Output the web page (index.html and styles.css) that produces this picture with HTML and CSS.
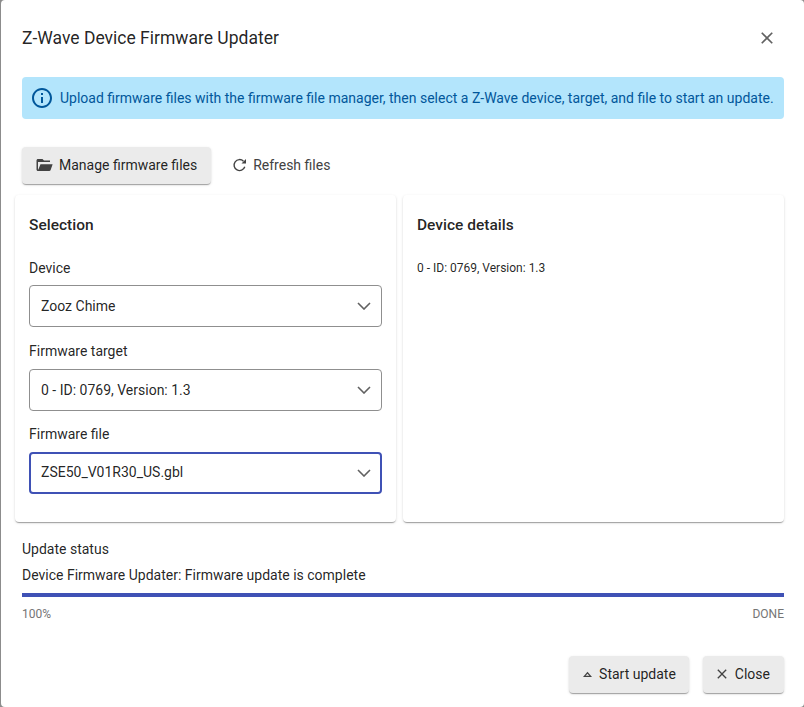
FILE: index.html
```html
<!DOCTYPE html>
<html lang="en">
<head>
<meta charset="utf-8">
<title>Z-Wave Device Firmware Updater</title>
<link rel="stylesheet" href="styles.css">
</head>
<body>
<main class="dialog">
  <header class="dialog-head">
    <h1 class="dialog-title">Z-Wave Device Firmware Updater</h1>
    <svg class="close-x" viewBox="0 0 24 24"><path d="M19 6.41 17.59 5 12 10.59 6.41 5 5 6.41 10.59 12 5 17.59 6.41 19 12 13.41 17.59 19 19 17.59 13.41 12z"/></svg>
  </header>
  <div class="alert">
    <svg class="alert-icon" viewBox="0 0 24 24"><path d="M11 7h2v2h-2zm0 4h2v6h-2zm1-9C6.48 2 2 6.48 2 12s4.48 10 10 10 10-4.48 10-10S17.52 2 12 2zm0 18c-4.41 0-8-3.59-8-8s3.59-8 8-8 8 3.59 8 8-3.59 8-8 8z"/></svg>
    <span>Upload firmware files with the firmware file manager, then select a Z-Wave device, target, and file to start an update.</span>
  </div>
  <div class="toolbar">
    <button class="btn raised manage">
      <svg class="btn-icon" viewBox="0 0 24 24"><path d="M20 6h-8l-2-2H4c-1.1 0-2 .9-2 2v12c0 1.1.9 2 2 2h15c.84 0 1.55-.52 1.84-1.25L23.5 11H7.3l-2.8 7H4V8h16z"/></svg>
      Manage firmware files
    </button>
    <button class="btn flat refresh">
      <svg class="refresh-icon" viewBox="0 0 16 16"><path class="refresh-arc" d="M12.800 9.800A5.500 5.500 0 1 1 11.500 4.200"/><path class="refresh-head" d="M14 2v4.500H9.500z"/></svg>
      Refresh files
    </button>
  </div>
  <div class="cards">
    <section class="card">
      <h2 class="card-title">Selection</h2>
      <div class="field">
        <div class="field-label">Device</div>
        <div class="select"><span>Zooz Chime</span><svg class="chev" viewBox="0 0 14 8"><path d="M1 1l6 6 6-6"/></svg></div>
      </div>
      <div class="field">
        <div class="field-label">Firmware target</div>
        <div class="select"><span>0 - ID: 0769, Version: 1.3</span><svg class="chev" viewBox="0 0 14 8"><path d="M1 1l6 6 6-6"/></svg></div>
      </div>
      <div class="field">
        <div class="field-label">Firmware file</div>
        <div class="select focused"><span>ZSE50_V01R30_US.gbl</span><svg class="chev" viewBox="0 0 14 8"><path d="M1 1l6 6 6-6"/></svg></div>
      </div>
    </section>
    <section class="card">
      <h2 class="card-title">Device details</h2>
      <p class="detail">0 - ID: 0769, Version: 1.3</p>
    </section>
  </div>
  <section class="status">
    <div class="status-label">Update status</div>
    <div class="status-text">Device Firmware Updater: Firmware update is complete</div>
    <div class="progress"></div>
    <div class="progress-meta"><span>100%</span><span>DONE</span></div>
  </section>
  <footer class="actions">
    <button class="btn raised start">
      <svg class="btn-icon" viewBox="0 0 16 16"><path d="M6.500 5.800 2 11h9zm0 2 1.900 2H4.600z" fill-rule="evenodd"/></svg>
      Start update
    </button>
    <button class="btn raised close">
      <svg class="btn-icon" viewBox="0 0 24 24"><path d="M19 6.41 17.59 5 12 10.59 6.41 5 5 6.41 10.59 12 5 17.59 6.41 19 12 13.41 17.59 19 19 17.59 13.41 12z"/></svg>
      Close
    </button>
  </footer>
</main>
</body>
</html>
```

FILE: styles.css
```css
* { box-sizing: border-box; }
html, body { margin: 0; height: 100%; }
body {
  background: #8c8c8c;
  font-family: Roboto, "Liberation Sans", sans-serif;
  color: rgba(0, 0, 0, 0.87);
  overflow: hidden;
}
.dialog {
  margin-left: 1px;
  height: 707px;
  background: #fff;
  border-radius: 4px;
  display: flex;
  flex-direction: column;
}
.dialog-head {
  display: flex;
  justify-content: space-between;
  align-items: center;
  height: 77px;
  padding: 0 27px 1px 21px;
}
.dialog-title {
  margin: 0;
  font-size: 17.500px;
  font-weight: 400;
  line-height: 24px;
}
.close-x { width: 20px; height: 20px; fill: #616161; }
.alert {
  margin: 0 20px 0 21px;
  height: 42px;
  background: #b3e5fc;
  border-radius: 4px;
  display: flex;
  align-items: center;
  gap: 6px;
  padding-left: 8px;
  font-size: 14px;
  color: #01579b;
  white-space: nowrap;
}
.alert-icon { width: 24px; height: 24px; fill: #01579b; flex: none; }
.toolbar {
  display: flex;
  gap: 8px;
  margin: 28px 0 0 21px;
  height: 37px;
}
.btn {
  display: inline-flex;
  align-items: center;
  gap: 6px;
  height: 37px;
  border: 0;
  border-radius: 4px;
  background: transparent;
  font: 400 14px/20px Roboto, "Liberation Sans", sans-serif;
  color: rgba(0, 0, 0, 0.87);
  padding: 0 13px 1px;
  white-space: nowrap;
}
.btn.raised {
  background: #ebebeb;
  box-shadow: 0 2px 1px -1px rgba(0,0,0,.2), 0 1px 1px rgba(0,0,0,.14), 0 1px 3px rgba(0,0,0,.12);
}
.btn.flat { color: #424242; }
.btn-icon { fill: #424242; flex: none; width: 18px; height: 18px; }
.manage { padding-right: 14px; }
.refresh { padding-left: 13px; gap: 5px; }
.refresh-icon { width: 16px; height: 16px; flex: none; }
.refresh-arc { fill: none; stroke: #424242; stroke-width: 1.400; }
.refresh-head { fill: #424242; }
.start { padding: 0 13px 1px 12px; gap: 2px; }
.start .btn-icon { width: 16px; height: 16px; }
.close { padding: 0 14px 1px 11px; gap: 5px; }
.close .btn-icon { width: 16px; height: 16px; }
.cards {
  display: flex;
  gap: 7px;
  margin: 11px 20px 0 14px;
  height: 327px;
}
.card {
  flex: 1 1 0;
  background: #fff;
  border-radius: 4px;
  padding: 0 14px;
  box-shadow: 0 2px 1px -1px rgba(0,0,0,.2), 0 1px 1px rgba(0,0,0,.14), 0 1px 3px rgba(0,0,0,.12);
}
.card-title {
  margin: 0;
  padding-top: 20px;
  font-size: 15.500px;
  font-weight: 500;
  line-height: 20px;
  height: 60px;
}
.field { margin-bottom: 14px; }
.field-label {
  font-size: 14px;
  line-height: 20px;
  height: 20px;
  margin: 3px 0 7px;
}
.field + .field .field-label { margin: 0 0 8px; }
.select {
  height: 42px;
  border: 1px solid #8f8f8f;
  border-radius: 4px;
  display: flex;
  align-items: center;
  justify-content: space-between;
  padding: 0 10px 0 11px;
  font-size: 14px;
}
.select.focused { border: 2px solid #3f51b5; padding: 0 9px 2px 10px; }
.select.focused .chev { margin-top: 2px; }
.field + .field + .field { margin-top: -1px; }
.chev { width: 14px; height: 8px; fill: none; stroke: #616161; stroke-width: 1.600; }
.detail {
  margin: 5px 0 0;
  font-size: 12px;
  line-height: 16px;
}
.status { margin: 17px 20px 0 21px; }
.status-label { font-size: 14px; line-height: 20px; }
.status-text { font-size: 14px; line-height: 20px; margin-top: 6px; }
.progress { height: 4px; background: #3f51b5; margin-top: 8px; }
.progress-meta {
  display: flex;
  justify-content: space-between;
  font-size: 12px;
  line-height: 16px;
  color: #757575;
  margin-top: 9px;
}
.actions {
  display: flex;
  justify-content: flex-end;
  gap: 14px;
  margin: 34px 20px 0 0;
}
```
